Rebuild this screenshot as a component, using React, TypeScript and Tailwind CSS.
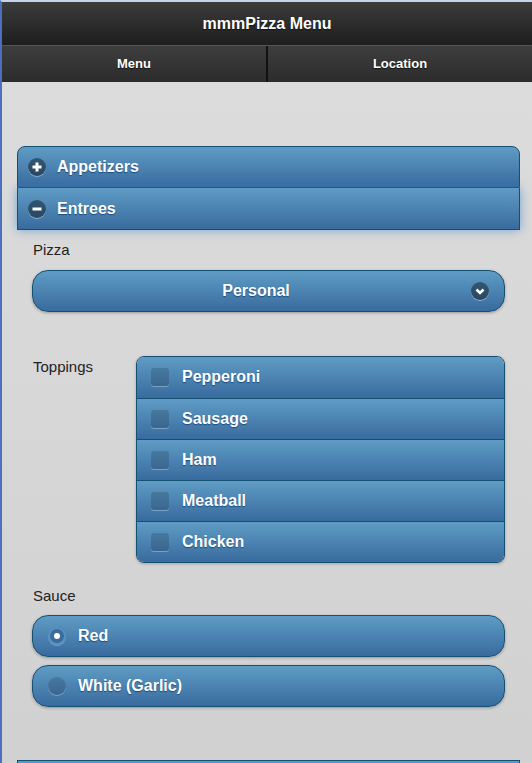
import React from "react";

const blueBar =
  "bg-gradient-to-b from-[#5f9cc5] to-[#396b9e] text-white font-bold text-[16px] [text-shadow:0_1px_1px_#194b7e]";

function CircleIcon({ kind }: { kind: "plus" | "minus" | "down" }) {
  return (
    <span className="flex h-[18px] w-[18px] items-center justify-center rounded-full bg-[rgba(0,0,0,0.4)] shadow-[0_1px_0_rgba(255,255,255,0.4)]">
      <svg width="12" height="12" viewBox="0 0 12 12">
        {kind === "plus" && (
          <path d="M6 1.5v9M1.5 6h9" stroke="white" strokeWidth="3" />
        )}
        {kind === "minus" && <path d="M1.5 6h9" stroke="white" strokeWidth="3" />}
        {kind === "down" && (
          <path d="M2.5 4.5L6 8l3.5-3.5" stroke="white" strokeWidth="2.6" fill="none" />
        )}
      </svg>
    </span>
  );
}

export default function App() {
  const toppings = ["Pepperoni", "Sausage", "Ham", "Meatball", "Chicken"];
  return (
    <div className="h-[763px] w-[532px] overflow-hidden border-l-2 border-t-2 border-l-[#4b70c0] border-t-[#c3d3ea] font-['Liberation_Sans',Arial,sans-serif]">
      {/* header */}
      <div className="flex h-[43px] items-center justify-center bg-gradient-to-b from-[#3c3c3c] to-[#1e1e1e] text-[16px] font-bold text-white [text-shadow:0_1px_1px_#111]">
        mmmPizza Menu
      </div>
      {/* navbar */}
      <div className="flex h-[37px] bg-gradient-to-b from-[#3e3e3e] to-[#2c2c2c] border-t border-[#555]">
        <div className="flex flex-1 items-center justify-center border-r-2 border-[#111] text-[13px] font-bold text-white [text-shadow:0_1px_1px_#111]">
          Menu
        </div>
        <div className="flex flex-1 items-center justify-center text-[13px] font-bold text-white [text-shadow:0_1px_1px_#111]">
          Location
        </div>
      </div>
      {/* content */}
      <div className="h-[682px] bg-gradient-to-b from-[#dcdcdc] to-[#d1d1d1] pl-[15px] pr-[12px] pt-[64px]">
        {/* collapsible set */}
        <div className="rounded-t-[8px]">
          <div
            className={`${blueBar} flex h-[42px] items-center gap-[11px] rounded-t-[8px] border border-[#145072] pl-[10px]`}
          >
            <CircleIcon kind="plus" />
            <span>Appetizers</span>
          </div>
          <div
            className={`${blueBar} flex h-[42px] items-center gap-[11px] border border-t-0 border-[#145072] pl-[10px] shadow-[0_0_10px_rgba(56,125,195,0.6)]`}
          >
            <CircleIcon kind="minus" />
            <span>Entrees</span>
          </div>
        </div>
        {/* collapsible content */}
        <div className="px-[15px]">
          <div className="pt-[9px] text-[15px] text-[#222] pl-px">Pizza</div>
          <div
            className={`${blueBar} relative mt-[8px] flex h-[42px] items-center justify-center rounded-[16px] border border-[#145072] pl-[15px] pr-[40px] shadow-[0_1px_3px_rgba(0,0,0,0.3)]`}
          >
            <span>Personal</span>
            <span className="absolute right-[15px] top-[11px]">
              <CircleIcon kind="down" />
            </span>
          </div>

          <div className="mt-[44px] flex">
            <div className="w-[104px] text-[15px] text-[#222] pl-px">Toppings</div>
            <div className="flex-1 overflow-hidden rounded-[8px] border border-[#145072] shadow-[0_1px_3px_rgba(0,0,0,0.25)]">
              {toppings.map((t, i) => (
                <div
                  key={t}
                  className={`${blueBar} flex h-[41px] items-center gap-[13px] pl-[14px] ${
                    i > 0 ? "border-t border-[#145072]" : ""
                  }`}
                >
                  <span className="h-[18px] w-[18px] rounded-[3px] bg-[rgba(0,0,0,0.15)] shadow-[0_1px_0_rgba(255,255,255,0.3)]" />
                  <span>{t}</span>
                </div>
              ))}
            </div>
          </div>

          <div className="pt-[22px] text-[15px] text-[#222] pl-px">Sauce</div>
          <div
            className={`${blueBar} mt-[8px] flex h-[42px] items-center gap-[12px] rounded-[16px] border border-[#145072] pl-[15px] shadow-[0_1px_3px_rgba(0,0,0,0.3)]`}
          >
            <span className="flex h-[18px] w-[18px] items-center justify-center rounded-full bg-[#3a6c9e] shadow-[inset_0_0_0_2px_rgba(110,170,215,0.6),0_1px_0_rgba(255,255,255,0.3)]">
              <span className="h-[6px] w-[6px] rounded-full bg-white" />
            </span>
            <span>Red</span>
          </div>
          <div
            className={`${blueBar} mt-[8px] flex h-[42px] items-center gap-[12px] rounded-[16px] border border-[#145072] pl-[15px] shadow-[0_1px_3px_rgba(0,0,0,0.3)]`}
          >
            <span className="h-[18px] w-[18px] rounded-full bg-[rgba(0,0,0,0.15)] shadow-[0_1px_0_rgba(255,255,255,0.3)]" />
            <span>White (Garlic)</span>
          </div>
        </div>
        <div className="mt-[53px] h-[20px] border border-[#145072] bg-gradient-to-b from-[#5f9cc5] to-[#396b9e]" />
      </div>
    </div>
  );
}
